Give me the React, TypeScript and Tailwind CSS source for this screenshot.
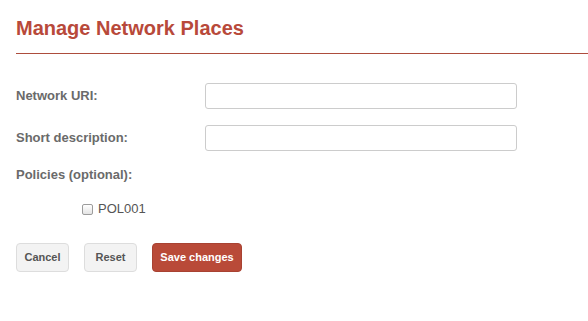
import * as React from "react";

const Field = ({ label }: { label: string }) => (
  <div className="flex items-center">
    <label className="w-[189px] text-[13px] leading-4 font-bold text-[#6a6a6a]">
      {label}
    </label>
    <input
      type="text"
      className="w-[312px] h-[26px] border border-[#cccccc] rounded-[3px] bg-white px-2 text-[13px] outline-none"
    />
  </div>
);

export default function App() {
  return (
    <div className="min-h-screen bg-white pl-4 pt-4 font-['Liberation_Sans',Arial,sans-serif]">
      <h1 className="text-[20px] leading-6 font-bold text-[#b8493a]">
        Manage Network Places
      </h1>
      <div className="mt-[13px] h-px bg-[#ad4d3d]" />

      <form className="mt-[29px] flex flex-col">
        <Field label="Network URI:" />
        <div className="mt-4">
          <Field label="Short description:" />
        </div>
        <div className="mt-4 text-[13px] leading-4 font-bold text-[#6a6a6a]">
          Policies (optional):
        </div>
        <label className="mt-[18px] ml-[66px] flex items-center gap-[5px] text-[13px] leading-4 text-[#555555]">
          <input
            type="checkbox"
            className="appearance-none w-[11px] h-[11px] border border-[#9c9c9c] rounded-[2px] bg-gradient-to-b from-white to-[#e4e4e4]"
          />
          POL001
        </label>

        <div className="mt-[26px] flex gap-[15px]">
          <button
            type="button"
            className="h-[29px] w-[53px] rounded-[4px] border border-[#dddddd] bg-[#f3f3f3] text-[11px] font-bold text-[#555555]"
          >
            Cancel
          </button>
          <button
            type="button"
            className="h-[29px] w-[53px] rounded-[4px] border border-[#dddddd] bg-[#f3f3f3] text-[11px] font-bold text-[#555555]"
          >
            Reset
          </button>
          <button
            type="button"
            className="h-[29px] w-[90px] rounded-[4px] border border-[#a84232] bg-[#b94a38] text-[11px] font-bold text-white"
          >
            Save changes
          </button>
        </div>
      </form>
    </div>
  );
}
